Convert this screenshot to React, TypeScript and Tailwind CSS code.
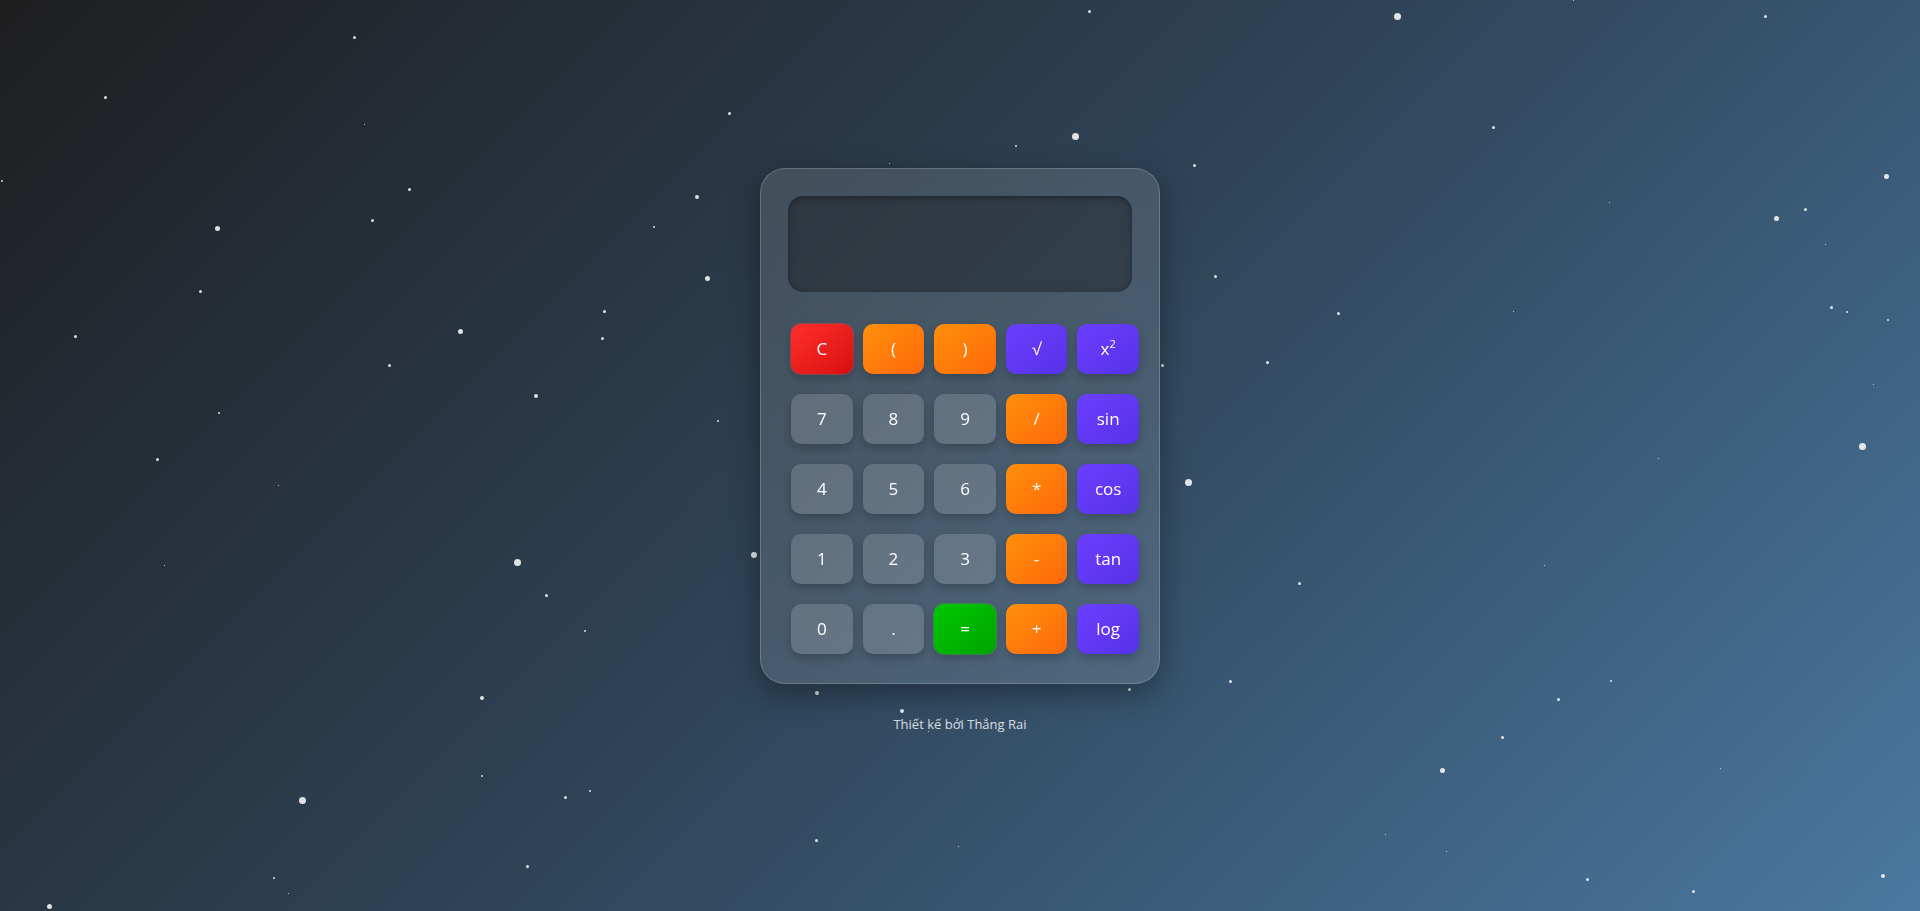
const STARS: [number, number, number][] = [
  [354, 37, 3], [105, 97, 3], [364, 124, 1], [409, 189, 3], [372, 220, 3],
  [217, 228, 5], [200, 291, 3], [75, 336, 3], [460, 331, 5], [389, 365, 3],
  [536, 396, 4], [219, 413, 2], [157, 459, 3], [2, 181, 2], [729, 113, 3],
  [697, 197, 4], [654, 227, 2], [707, 278, 5], [604, 311, 3], [602, 338, 3],
  [718, 421, 2], [278, 485, 1], [517, 562, 7], [754, 555, 6], [546, 595, 3],
  [164, 565, 1], [585, 631, 2], [482, 698, 4], [482, 776, 2], [302, 800, 7],
  [565, 797, 3], [590, 791, 2], [527, 866, 3], [274, 878, 2], [288, 893, 1],
  [49, 906, 5], [816, 840, 3], [817, 693, 4], [902, 711, 4], [928, 731, 1],
  [958, 846, 1], [1089, 11, 3], [1075, 136, 7], [1016, 146, 2], [889, 163, 1],
  [1194, 165, 3], [1215, 276, 3], [1162, 365, 3], [1188, 482, 7], [1267, 362, 3],
  [1338, 313, 3], [1299, 583, 3], [1230, 681, 3], [1129, 689, 3], [1397, 16, 7],
  [1493, 127, 3], [1573, 0, 1], [1765, 16, 3], [1609, 202, 1], [1776, 218, 5],
  [1805, 209, 3], [1825, 244, 1], [1886, 176, 5], [1513, 311, 1], [1831, 307, 3],
  [1847, 312, 2], [1888, 320, 2], [1873, 384, 1], [1862, 446, 7], [1658, 458, 1],
  [1544, 565, 1], [1558, 699, 3], [1611, 681, 2], [1502, 737, 3], [1442, 770, 5],
  [1720, 768, 1], [1385, 834, 1], [1446, 851, 1], [1587, 879, 3], [1693, 891, 3],
  [1883, 876, 4],
];

const NUM = "bg-white/15";
const ORANGE = "bg-gradient-to-br from-[#ff8f0a] to-[#ff680a]";
const PURPLE = "bg-gradient-to-br from-[#6c3eff] to-[#5632e8]";
const RED = "bg-gradient-to-br from-[#ff2e2e] to-[#d90b0b] ring-1 ring-[#ff4040]/40";
const GREEN = "bg-gradient-to-br from-[#00c800] to-[#00a300] ring-1 ring-[#30d030]/40";

const KEYS: { label: React.ReactNode; tone: string }[] = [
  { label: "C", tone: RED },
  { label: "(", tone: ORANGE },
  { label: ")", tone: ORANGE },
  { label: "√", tone: PURPLE },
  { label: <>x<sup className="text-[11px] -top-[0.45em]">2</sup></>, tone: PURPLE },
  { label: "7", tone: NUM },
  { label: "8", tone: NUM },
  { label: "9", tone: NUM },
  { label: "/", tone: ORANGE },
  { label: "sin", tone: PURPLE },
  { label: "4", tone: NUM },
  { label: "5", tone: NUM },
  { label: "6", tone: NUM },
  { label: "*", tone: ORANGE },
  { label: "cos", tone: PURPLE },
  { label: "1", tone: NUM },
  { label: "2", tone: NUM },
  { label: "3", tone: NUM },
  { label: "-", tone: ORANGE },
  { label: "tan", tone: PURPLE },
  { label: "0", tone: NUM },
  { label: ".", tone: NUM },
  { label: "=", tone: GREEN },
  { label: "+", tone: ORANGE },
  { label: "log", tone: PURPLE },
];

function Stars() {
  return (
    <div className="absolute inset-0 overflow-hidden pointer-events-none">
      {STARS.map(([x, y, s], i) => (
        <span
          key={i}
          className="absolute rounded-full bg-white/85"
          style={{ left: x - s / 2, top: y - s / 2, width: s, height: s }}
        />
      ))}
    </div>
  );
}

export default function App() {
  return (
    <div className="relative min-h-screen overflow-hidden bg-[linear-gradient(135deg,#1e1e1f,#2f4458,#4a78a0)] font-['Open_Sans','Noto_Sans',sans-serif]">
      <Stars />
      <div className="relative flex min-h-screen flex-col items-center justify-center pb-[9px]">
        <div className="w-[400px] rounded-[25px] border border-white/20 bg-white/[0.12] px-[27px] pt-[27px] pb-[29px] shadow-[0_10px_30px_rgba(0,0,0,0.35)] backdrop-blur-md">
          <div className="h-[96px] rounded-[15px] bg-black/30 shadow-[inset_0_2px_6px_rgba(0,0,0,0.35)]" />
          <div className="mt-[32px] ml-[3px] grid w-[348px] grid-cols-5 gap-x-[10px] gap-y-[20px]">
            {KEYS.map((k, i) => (
              <button
                key={i}
                className={`flex h-[50px] items-center justify-center rounded-[10px] text-[17px] text-white shadow-[0_4px_10px_rgba(0,0,0,0.22)] ${k.tone}`}
              >
                {k.label}
              </button>
            ))}
          </div>
        </div>
        <p className="mt-[30px] text-[13px] leading-[20px] text-white/80">Thiết kế bởi Thắng Rai</p>
      </div>
    </div>
  );
}
